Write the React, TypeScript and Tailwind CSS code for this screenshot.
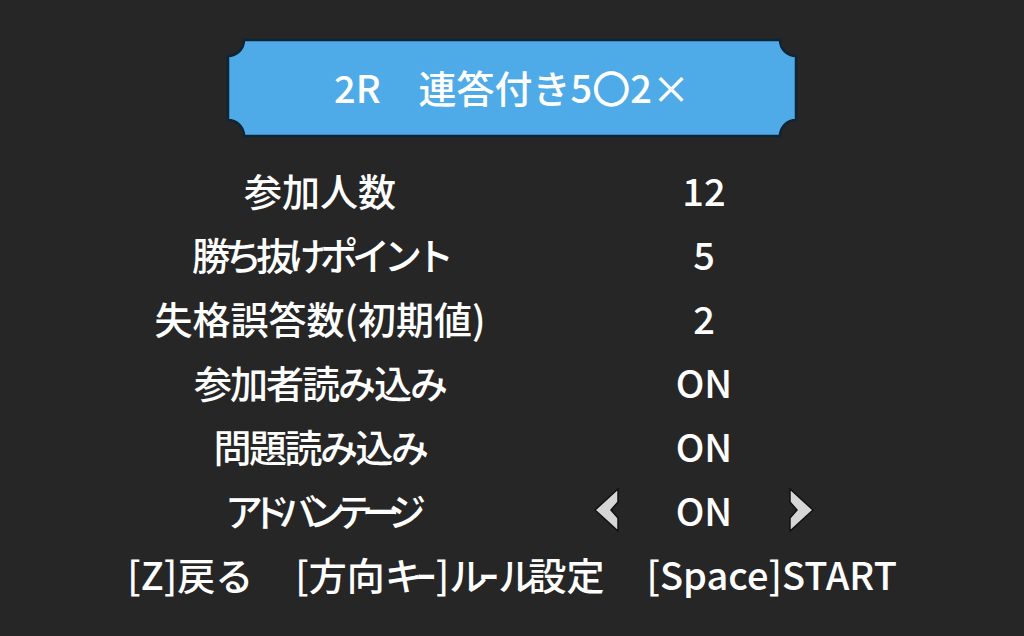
import React from "react";

const rows: { label: string; value: string; track: string; arrows?: boolean }[] = [
  { label: "参加人数", value: "12", track: "tracking-normal" },
  { label: "勝ち抜けポイント", value: "5", track: "tracking-[-6px]" },
  { label: "失格誤答数(初期値)", value: "2", track: "tracking-normal" },
  { label: "参加者読み込み", value: "ON", track: "tracking-[-2px]" },
  { label: "問題読み込み", value: "ON", track: "tracking-[-2.5px]" },
  { label: "アドバンテージ", value: "ON", track: "tracking-[-11px]", arrows: true },
];

function Banner({ children }: { children: React.ReactNode }) {
  const w = 568;
  const h = 96;
  const r = 16;
  return (
    <div className="relative w-[572px] h-[100px] flex items-center justify-center">
      <svg className="absolute inset-0" width="572" height="100" viewBox="-2 -2 572 100">
        <path
          d={`M${r},0 H${w - r} A${r} ${r} 0 0 0 ${w},${r} V${h - r} A${r} ${r} 0 0 0 ${w - r},${h} H${r} A${r} ${r} 0 0 0 0,${h - r} V${r} A${r} ${r} 0 0 0 ${r},0 Z`}
          fill="#4eabe7"
          stroke="#0e2436"
          strokeWidth="2.5"
        />
      </svg>
      <span className="relative pb-[2px] text-white text-[38px] leading-none">{children}</span>
    </div>
  );
}

function Arrow({ dir, show }: { dir: "left" | "right"; show: boolean }) {
  return (
    <svg width="26" height="44" viewBox="0 0 26 44" className={show ? "" : "invisible"}>
      <polygon
        points={dir === "left" ? "1,22 24,1 24,14 17,22 24,30 24,43" : "25,22 2,1 2,14 9,22 2,30 2,43"}
        fill="#d6d6d6"
        stroke="#111"
        strokeWidth="1.5"
      />
    </svg>
  );
}

export default function App() {
  return (
    <div className="w-[1024px] h-[636px] bg-[#262626] text-white flex flex-col items-center pt-[38px] overflow-hidden font-medium font-['Noto_Sans_CJK_JP','Noto_Sans',sans-serif]">
      <Banner>2R　連答付き5〇2×</Banner>
      <div className="mt-[20px] grid grid-cols-[590px_228px] w-[818px] self-start">
        {rows.map((row) => (
          <React.Fragment key={row.label}>
            <div className={`h-[64px] pl-[50px] flex items-center justify-center text-[38px] leading-none ${row.track}`}>
              {row.label}
            </div>
            <div className="h-[64px] px-[4px] flex items-center justify-between text-[38px] leading-none">
              <Arrow dir="left" show={!!row.arrows} />
              <span>{row.value}</span>
              <Arrow dir="right" show={!!row.arrows} />
            </div>
          </React.Fragment>
        ))}
      </div>
      <div className="h-[64px] flex items-center gap-[42px] text-[38px] leading-none whitespace-pre">
        <span>[Z]戻る</span>
        <span>
          [方向<span className="tracking-[-6px]">キ</span>ｰ]<span className="tracking-[-8px]">ル</span>ｰ<span className="tracking-[-8px]">ル</span>設定
        </span>
        <span>[Space]START</span>
      </div>
    </div>
  );
}
